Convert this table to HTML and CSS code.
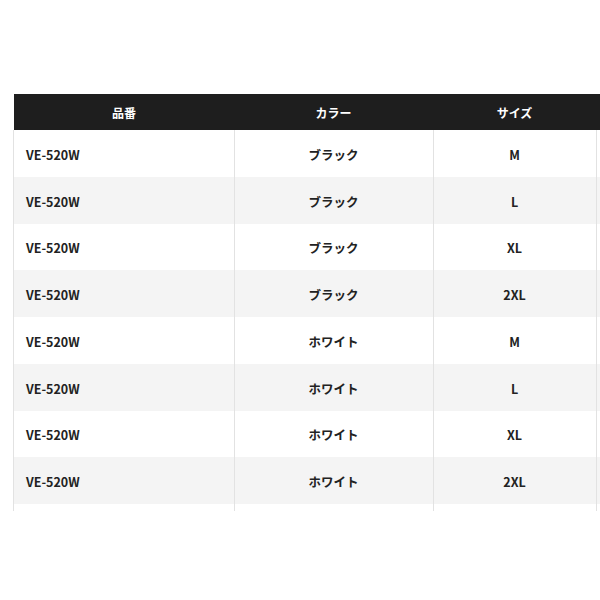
FILE: index.html
```html
<!DOCTYPE html>
<html lang="ja">
<head>
<meta charset="utf-8">
<link rel="stylesheet" href="styles.css">
</head>
<body>
<div class="frame">
<table class="spec">
<thead>
<tr><th class="c1">品番</th><th class="c2">カラー</th><th class="c3">サイズ</th><th class="c4"></th></tr>
</thead>
<tbody>
<tr><td class="c1 code">VE-520W</td><td class="c2">ブラック</td><td class="c3">M</td><td class="c4"></td></tr>
<tr><td class="c1 code">VE-520W</td><td class="c2">ブラック</td><td class="c3">L</td><td class="c4"></td></tr>
<tr><td class="c1 code">VE-520W</td><td class="c2">ブラック</td><td class="c3">XL</td><td class="c4"></td></tr>
<tr><td class="c1 code">VE-520W</td><td class="c2">ブラック</td><td class="c3">2XL</td><td class="c4"></td></tr>
<tr><td class="c1 code">VE-520W</td><td class="c2">ホワイト</td><td class="c3">M</td><td class="c4"></td></tr>
<tr><td class="c1 code">VE-520W</td><td class="c2">ホワイト</td><td class="c3">L</td><td class="c4"></td></tr>
<tr><td class="c1 code">VE-520W</td><td class="c2">ホワイト</td><td class="c3">XL</td><td class="c4"></td></tr>
<tr><td class="c1 code">VE-520W</td><td class="c2">ホワイト</td><td class="c3">2XL</td><td class="c4"></td></tr>
<tr class="partial"><td class="c1"></td><td class="c2"></td><td class="c3"></td><td class="c4"></td></tr>
</tbody>
</table>
</div>
</body>
</html>
```
FILE: styles.css
```css
html, body {
  margin: 0;
  padding: 0;
  background: #fff;
  overflow: hidden;
  width: 600px;
  height: 600px;
}
.frame {
  margin: 94px 0 0 13px;
  height: 417px;
  width: 587px;
  overflow: hidden;
}
.spec {
  border-collapse: collapse;
  table-layout: fixed;
  width: 800px;
  font-family: "Noto Sans CJK JP", "Noto Sans", sans-serif;
  font-weight: 700;
  font-size: 12px;
  color: #222;
}
.c1 { width: 220px; }
.c2 { width: 199px; }
.c3 { width: 163px; }
.c4 { width: 218px; }
.spec th {
  background: #1e1e1e;
  color: #fff;
  height: 36px;
  padding: 0;
  text-align: center;
  font-weight: 700;
}
.spec thead tr th:first-child {
  border-left: 1px solid #fff;
}
.spec td {
  height: 46.75px;
  padding: 2px 0 0;
  box-sizing: border-box;
  text-align: center;
  font-size: 12.5px;
  border-left: 1px solid #e2e2e2;
}
.spec td.code {
  text-align: left;
  padding-left: 12px;
}
.spec tbody tr:nth-child(even) td {
  background: #f4f4f4;
}
.spec tbody tr.partial td {
  height: 10px;
}
```
